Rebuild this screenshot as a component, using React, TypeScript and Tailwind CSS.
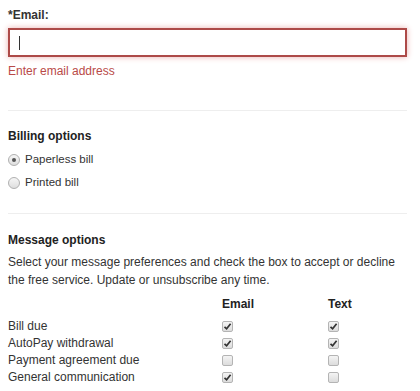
import React from "react";

const rows = [
  { label: "Bill due", email: true, text: true },
  { label: "AutoPay withdrawal", email: true, text: true },
  { label: "Payment agreement due", email: false, text: false },
  { label: "General communication", email: true, text: false },
];

function Check({ checked }: { checked: boolean }) {
  return (
    <span className="inline-flex items-center justify-center w-[11px] h-[11px] rounded-[2px] border border-[#b4b4b4] bg-gradient-to-b from-[#f4f4f4] to-[#dcdcdc]">
      {checked && (
        <svg width="9" height="9" viewBox="0 0 9 9">
          <path d="M1.5 4.8 L3.6 6.8 L7.6 1.8" fill="none" stroke="#333" strokeWidth="1.7" />
        </svg>
      )}
    </span>
  );
}

function Radio({ checked, label }: { checked: boolean; label: string }) {
  return (
    <label className="flex items-center gap-[5px] h-[23px]">
      <span className="inline-flex items-center justify-center w-[12px] h-[12px] rounded-full border border-[#b0b0b0] bg-gradient-to-b from-[#f6f6f6] to-[#dedede]">
        {checked && <span className="w-[4px] h-[4px] rounded-full bg-[#555]" />}
      </span>
      <span>{label}</span>
    </label>
  );
}

export default function App() {
  return (
    <div className="w-[420px] h-[391px] bg-white px-2 text-[12px] leading-[19px] text-[#333] font-['Liberation_Sans',Arial,sans-serif] overflow-hidden">
      {/* Email */}
      <div className="pt-[6px]">
        <div className="font-bold h-[19px]">*Email:</div>
        <div className="mt-[3px] h-[29px] w-[399px] border-2 border-[#ad4a48] shadow-[0_0_6px_#eab0af] flex items-center pl-[9px]">
          <span className="w-px h-[14px] bg-[#333]" />
        </div>
        <div className="mt-[5px] text-[#b94a48]">Enter email address</div>
      </div>

      <div className="mt-[29px] h-px w-[399px] bg-[#eeeeee]" />

      {/* Billing */}
      <div className="pt-[16px]">
        <div className="font-bold h-[19px] text-[#222]">Billing options</div>
        <div className="mt-[2px] text-[11.5px]">
          <Radio checked label="Paperless bill" />
          <Radio checked={false} label="Printed bill" />
        </div>
      </div>

      <div className="mt-[19px] h-px w-[399px] bg-[#eeeeee]" />

      {/* Messages */}
      <div className="pt-[17px]">
        <div className="font-bold h-[19px] text-[#222]">Message options</div>
        <p className="mt-[3px] max-w-[396px] leading-[18px]">
          Select your message preferences and check the box to accept or decline the free service. Update or unsubscribe any time.
        </p>
        <div className="mt-[7px] grid grid-cols-[214px_106px_1fr] leading-[17px]">
          <div />
          <div className="font-bold text-[#222] pb-[5px]">Email</div>
          <div className="font-bold text-[#222] pb-[5px]">Text</div>
          {rows.map((r) => (
            <React.Fragment key={r.label}>
              <div>{r.label}</div>
              <div className="flex items-center">
                <Check checked={r.email} />
              </div>
              <div className="flex items-center">
                <Check checked={r.text} />
              </div>
            </React.Fragment>
          ))}
        </div>
      </div>
    </div>
  );
}
